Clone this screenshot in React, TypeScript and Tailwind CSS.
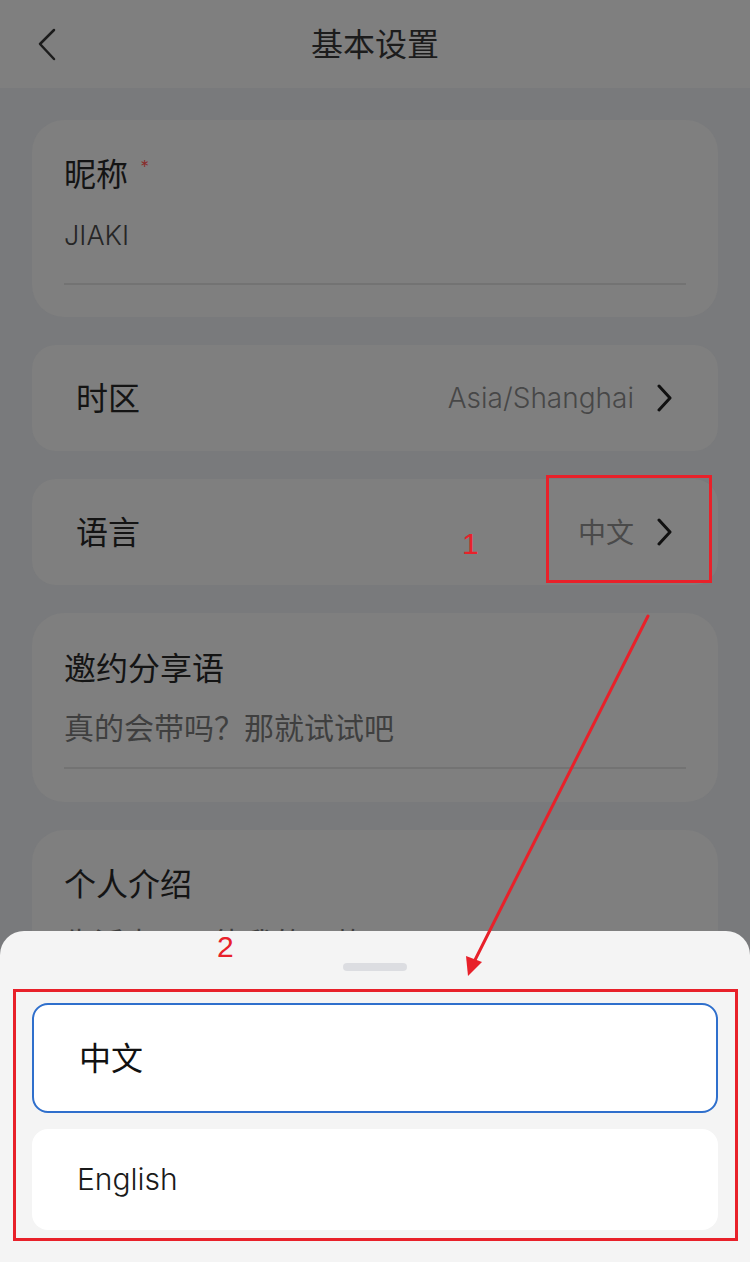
import React from "react";

const font = "font-['Lato','Noto_Sans_CJK_SC',sans-serif]";
const latin = "font-['Inter','Noto_Sans_CJK_SC',sans-serif]";

const Chevron: React.FC = () => (
  <svg width="18" height="28" viewBox="0 0 18 28" fill="none">
    <polyline points="3,2 14,14 3,26" stroke="#111" strokeWidth="3" strokeLinecap="round" strokeLinejoin="round" />
  </svg>
);

const App: React.FC = () => {
  return (
    <div className={`relative w-[750px] h-[1262px] overflow-hidden bg-[#797a7c] ${font}`}>
      {/* Header */}
      <header className="relative h-[88px] bg-[#7f7f7f] flex items-center justify-center">
        <svg className="absolute left-[34px] top-[27px]" width="24" height="36" viewBox="0 0 24 36" fill="none">
          <polyline points="20,3 6,17 20,32" stroke="#1c1c1c" strokeWidth="2.5" strokeLinecap="round" strokeLinejoin="round" />
        </svg>
        <h1 className="text-[32px] leading-[40px] text-[#1c1c1c]">基本设置</h1>
      </header>

      {/* Settings */}
      <div className="flex flex-col gap-[28px] px-[32px] pt-[32px]">
        {/* Nickname */}
        <div className="rounded-[32px] bg-[#7f7f7f] px-[32px] pt-[34px] pb-[32px]">
          <div className="flex items-start text-[32px] leading-[40px] text-[#141414]">
            昵称
            <span className="ml-[12px] text-[22px] leading-[28px] text-[#8a2a2a]">*</span>
          </div>
          <div className={`mt-[22px] text-[27px] leading-[40px] font-light text-[#262626] ${latin}`}>JIAKI</div>
          <div className="mt-[27px] h-[2px] bg-[#737373]" />
        </div>

        {/* Timezone */}
        <div className="h-[106px] rounded-[24px] bg-[#7f7f7f] pl-[44px] pr-[44px] flex items-center justify-between">
          <span className="text-[32px] text-[#141414]">时区</span>
          <div className="flex items-center gap-[22px]">
            <span className={`text-[28px] font-light text-[#474747] ${latin}`}>Asia/Shanghai</span>
            <Chevron />
          </div>
        </div>

        {/* Language */}
        <div className="h-[106px] rounded-[24px] bg-[#7f7f7f] pl-[44px] pr-[44px] flex items-center justify-between">
          <span className="text-[32px] text-[#141414]">语言</span>
          <div className="flex items-center gap-[22px]">
            <span className="text-[28px] text-[#4a4a4a]">中文</span>
            <Chevron />
          </div>
        </div>

        {/* Invite phrase */}
        <div className="rounded-[32px] bg-[#7f7f7f] px-[32px] pt-[35px] pb-[33px]">
          <div className="text-[32px] leading-[40px] text-[#141414]">邀约分享语</div>
          <div className="mt-[19px] text-[30px] leading-[40px] text-[#3f3f3f]">真的会带吗？那就试试吧</div>
          <div className="mt-[20px] h-[2px] bg-[#737373]" />
        </div>

        {/* Intro */}
        <div className="rounded-[32px] bg-[#7f7f7f] px-[32px] pt-[34px] pb-[40px]">
          <div className="text-[32px] leading-[40px] text-[#141414]">个人介绍</div>
          <div className="mt-[18px] text-[30px] leading-[40px] text-[#3f3f3f]">生活中不可能我的一款</div>
        </div>
      </div>

      {/* Bottom sheet */}
      <div className="absolute left-0 right-0 top-[931px] bottom-0 rounded-t-[24px] bg-[#f4f4f4]">
        <div className="mx-auto mt-[32px] h-[8px] w-[64px] rounded-full bg-[#dcdde1]" />
        <div className="mt-[32px] flex flex-col gap-[16px] px-[32px]">
          <div className="h-[110px] rounded-[16px] border-2 border-[#2f6fcc] bg-white pl-[45px] flex items-center">
            <span className="text-[32px] text-[#111]">中文</span>
          </div>
          <div className="h-[101px] rounded-[16px] bg-white pl-[45px] flex items-center">
            <span className={`text-[30px] font-light text-[#1a1a1a] ${latin}`}>English</span>
          </div>
        </div>
      </div>

      {/* Annotations */}
      <div className="absolute left-[546px] top-[475px] w-[166px] h-[108px] border-[3px] border-[#e8212a]" />
      <span className="absolute left-[462px] top-[526px] text-[30px] leading-[36px] text-[#e8212a] font-['Liberation_Sans',sans-serif]">1</span>
      <span className="absolute left-[217px] top-[929px] text-[30px] leading-[36px] text-[#e8212a] font-['Liberation_Sans',sans-serif]">2</span>
      <div className="absolute left-[13px] top-[989px] w-[725px] h-[252px] border-[3px] border-[#e8212a]" />
      <svg className="absolute left-0 top-0 pointer-events-none" width="750" height="1262" viewBox="0 0 750 1262">
        <line x1="648" y1="616" x2="474" y2="962" stroke="#e8212a" strokeWidth="3" strokeLinecap="round" />
        <polygon points="468,976 466,956 482,962" fill="#e8212a" />
      </svg>
    </div>
  );
};

export default App;
